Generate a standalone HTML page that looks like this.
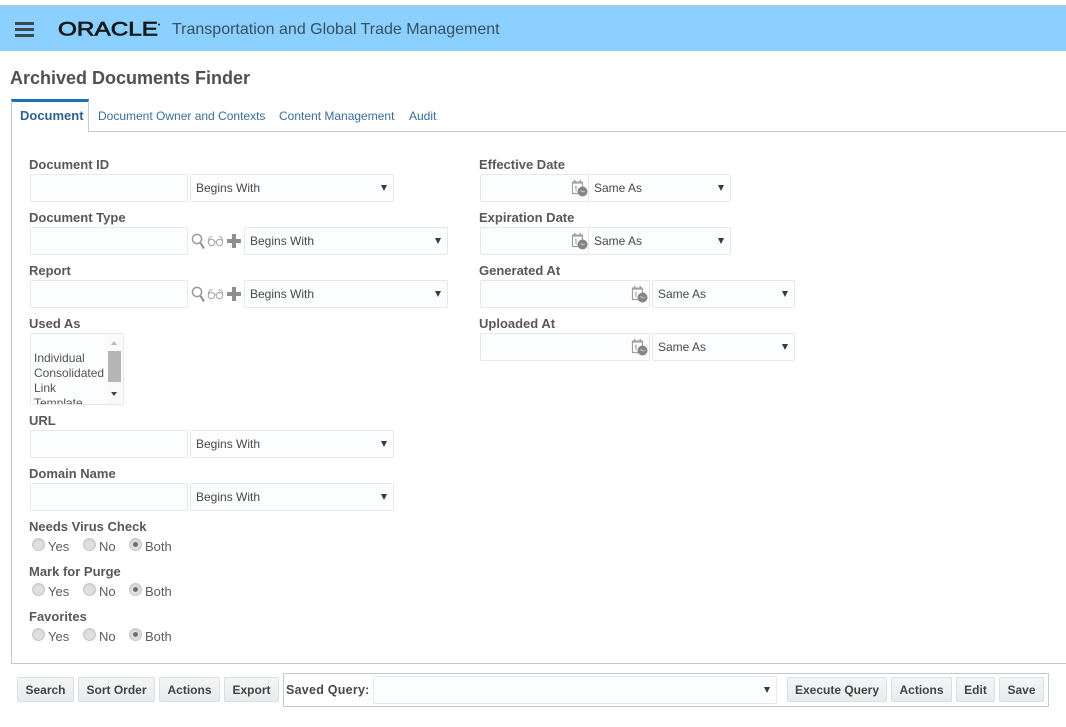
<!DOCTYPE html>
<html><head><meta charset="utf-8"><title>Archived Documents Finder</title>
<style>
html,body{margin:0;padding:0;background:#fff}
body{position:relative;width:1066px;height:727px;overflow:hidden;font-family:"Liberation Sans",sans-serif;font-size:12px;color:#4b4946}
.a,.l,.i,.s,.t,.b,.r,.c{position:absolute;box-sizing:border-box}
.l{font-weight:bold;font-size:13px;left:29px;line-height:16px;margin-top:1px;color:#5a5754;white-space:nowrap}
.i,.s{height:28px;background:#fbfdff;border:1px solid #e6e9ec;border-radius:2px}
.s{line-height:26px;padding-left:5px;color:#4a4846}
.s:after{content:"";position:absolute;right:6px;top:10px;border-left:3px solid transparent;border-right:3px solid transparent;border-top:6px solid #3a3a3a}
.t{font-size:12px;color:#3a6d96;line-height:16px;top:108px;white-space:nowrap}
.b{top:677px;height:25px;line-height:24px;background:linear-gradient(#f3f5f6,#e8ebed);border:1px solid #dcdfe2;border-radius:2px;text-align:center;font-weight:bold;font-size:12px;color:#454341;white-space:nowrap}
.r{width:13px;height:13px;border-radius:50%;background:#e0e0e0;border:1px solid #c8c8c8;box-shadow:inset 0 1px 2px #ccc}
.r.on:after{content:"";position:absolute;left:3px;top:3px;width:5px;height:5px;border-radius:50%;background:#707070}
.c{font-size:13px;line-height:16px;margin-top:1px;color:#605d5a;white-space:nowrap}
svg.ic{position:absolute;overflow:visible}
</style></head><body>
<svg width="0" height="0" style="position:absolute"><defs>
<symbol id="lov" viewBox="0 0 52 18" overflow="visible">
<circle cx="6" cy="7" r="4.600" fill="none" stroke="#999" stroke-width="1.500"/><path d="M9.500 11L13 16.500" stroke="#8b8b8b" stroke-width="2" fill="none"/>
<g fill="none" stroke="#a5a5a5" stroke-width="1"><circle cx="20.500" cy="10.500" r="3.200"/><circle cx="28.500" cy="10.500" r="3.200"/><path d="M23.700 10q.8-.8 1.600 0M17.300 9.500q.3-5 4-5M31.700 9.500q-.3-5-4-5"/></g>
<path d="M41 2h4v5h5v4h-5v5h-4v-5h-5v-4h5z" fill="#8e8e8e"/>
</symbol>
<symbol id="cal" viewBox="0 0 18 16" overflow="visible">
<path d="M1.500 3h10v10.500h-10z" fill="#fff" stroke="#a0a0a0" stroke-width="1.200"/><path d="M1 1.500h11v2H1zM3 0h1.500v2H3zM8.500 0H10v2H8.500z" fill="#a0a0a0"/>
<path d="M4 7l1-.7v5" stroke="#999" fill="none"/><circle cx="11.500" cy="11.500" r="5" fill="#858585"/><path d="M9.500 10.500l2.200 1.200h2" stroke="#ccc" fill="none"/>
</symbol>
</defs></svg>

<!-- header -->
<div class="a" style="left:0;top:5px;width:1066px;height:46px;background:#8cd0ff;border-top:1px solid #b4c6d2"></div>
<div class="a" style="left:15px;top:22px;width:19px;height:3px;background:#3a4a55"></div>
<div class="a" style="left:15px;top:28px;width:19px;height:3px;background:#3a4a55"></div>
<div class="a" style="left:15px;top:34px;width:19px;height:3px;background:#3a4a55"></div>
<svg class="ic" style="left:56px;top:18px" width="110" height="24"><text x="2" y="17.500" font-family="Liberation Sans" font-size="19" fill="#16191b" stroke="#16191b" stroke-width=".7" textLength="100" lengthAdjust="spacingAndGlyphs">ORACLE</text><circle cx="103" cy="6.500" r="1" fill="#16191b"/></svg>
<div class="a" style="left:172px;top:20px;font-size:16px;line-height:20px;color:#35505f;white-space:nowrap">Transportation and Global Trade Management</div>

<div class="a" style="left:10px;top:67px;font-size:18px;line-height:22px;font-weight:bold;color:#524f4c;white-space:nowrap">Archived Documents Finder</div>

<!-- tabs / panel -->
<div class="a" style="left:89px;top:131px;width:977px;height:1px;background:#bccdd8"></div>
<div class="a" style="left:11px;top:99px;width:78px;height:33px;border:1px solid #bccdd8;border-top:3px solid #1a6fb5;border-bottom:0;background:#fff"></div>
<div class="a" style="left:11px;top:131px;width:1055px;height:533px;border-left:1px solid #bccdd8;border-bottom:1px solid #bccdd8"></div>
<div class="a" style="left:20px;top:108px;font-size:13px;line-height:16px;font-weight:bold;color:#2f6490">Document</div>
<div class="t" style="left:98px">Document Owner and Contexts</div>
<div class="t" style="left:279px">Content Management</div>
<div class="t" style="left:409px">Audit</div>

<!-- left column -->
<div class="l" style="top:156px">Document ID</div>
<div class="i" style="left:30px;top:174px;width:158px"></div>
<div class="s" style="left:190px;top:174px;width:204px">Begins With</div>

<div class="l" style="top:209px">Document Type</div>
<div class="i" style="left:30px;top:227px;width:158px"></div>
<svg class="ic" style="left:191px;top:232px" width="52" height="18"><use href="#lov"/></svg>
<div class="s" style="left:244px;top:227px;width:204px">Begins With</div>

<div class="l" style="top:262px">Report</div>
<div class="i" style="left:30px;top:280px;width:158px"></div>
<svg class="ic" style="left:191px;top:285px" width="52" height="18"><use href="#lov"/></svg>
<div class="s" style="left:244px;top:280px;width:204px">Begins With</div>

<div class="l" style="top:315px">Used As</div>
<div class="i" style="left:30px;top:333px;width:94px;height:72px;overflow:hidden">
  <div class="a" style="left:3px;top:17px;line-height:15px;color:#55524f">Individual<br>Consolidated<br>Link<br>Template</div>
  <div class="a" style="right:2px;top:0;width:15px;height:70px;background:#fafafa"></div>
  <div class="a" style="left:77px;top:17px;width:13px;height:31px;background:#b5b5b5"></div>
  <div class="a" style="left:80px;top:7px;border-left:3.500px solid transparent;border-right:3.500px solid transparent;border-bottom:4px solid #bbb"></div>
  <div class="a" style="left:80px;top:58px;border-left:3.500px solid transparent;border-right:3.500px solid transparent;border-top:4px solid #444"></div>
</div>

<div class="l" style="top:412px">URL</div>
<div class="i" style="left:30px;top:430px;width:158px"></div>
<div class="s" style="left:190px;top:430px;width:204px">Begins With</div>

<div class="l" style="top:465px">Domain Name</div>
<div class="i" style="left:30px;top:483px;width:158px"></div>
<div class="s" style="left:190px;top:483px;width:204px">Begins With</div>

<div class="l" style="top:518px">Needs Virus Check</div>
<div class="r" style="left:32px;top:538px"></div><div class="c" style="left:48px;top:538px">Yes</div>
<div class="r" style="left:83px;top:538px"></div><div class="c" style="left:99px;top:538px">No</div>
<div class="r on" style="left:129px;top:538px"></div><div class="c" style="left:145px;top:538px">Both</div>

<div class="l" style="top:563px">Mark for Purge</div>
<div class="r" style="left:32px;top:583px"></div><div class="c" style="left:48px;top:583px">Yes</div>
<div class="r" style="left:83px;top:583px"></div><div class="c" style="left:99px;top:583px">No</div>
<div class="r on" style="left:129px;top:583px"></div><div class="c" style="left:145px;top:583px">Both</div>

<div class="l" style="top:608px">Favorites</div>
<div class="r" style="left:32px;top:628px"></div><div class="c" style="left:48px;top:628px">Yes</div>
<div class="r" style="left:83px;top:628px"></div><div class="c" style="left:99px;top:628px">No</div>
<div class="r on" style="left:129px;top:628px"></div><div class="c" style="left:145px;top:628px">Both</div>

<!-- right column -->
<div class="l" style="left:479px;top:156px">Effective Date</div>
<div class="i" style="left:480px;top:174px;width:109px"></div>
<svg class="ic" style="left:571px;top:180px" width="18" height="16"><use href="#cal"/></svg>
<div class="s" style="left:588px;top:174px;width:143px">Same As</div>

<div class="l" style="left:479px;top:209px">Expiration Date</div>
<div class="i" style="left:480px;top:227px;width:109px"></div>
<svg class="ic" style="left:571px;top:233px" width="18" height="16"><use href="#cal"/></svg>
<div class="s" style="left:588px;top:227px;width:143px">Same As</div>

<div class="l" style="left:479px;top:262px">Generated At</div>
<div class="i" style="left:480px;top:280px;width:170px"></div>
<svg class="ic" style="left:631px;top:286px" width="18" height="16"><use href="#cal"/></svg>
<div class="s" style="left:652px;top:280px;width:143px">Same As</div>

<div class="l" style="left:479px;top:315px">Uploaded At</div>
<div class="i" style="left:480px;top:333px;width:170px"></div>
<svg class="ic" style="left:631px;top:339px" width="18" height="16"><use href="#cal"/></svg>
<div class="s" style="left:652px;top:333px;width:143px">Same As</div>

<!-- bottom bar -->
<div class="b" style="left:17px;width:57px">Search</div>
<div class="b" style="left:78px;width:77px">Sort Order</div>
<div class="b" style="left:159px;width:61px">Actions</div>
<div class="b" style="left:224px;width:55px">Export</div>
<div class="a" style="left:283px;top:673px;width:766px;height:34px;border:1px solid #bccdd8"></div>
<div class="a" style="left:286px;top:683px;font-size:12.500px;letter-spacing:.25px;line-height:14px;font-weight:bold;color:#4b4946;white-space:nowrap">Saved Query:</div>
<div class="s" style="left:373px;top:676px;width:404px;height:28px"></div>
<div class="b" style="left:787px;width:100px">Execute Query</div>
<div class="b" style="left:891px;width:61px">Actions</div>
<div class="b" style="left:956px;width:39px">Edit</div>
<div class="b" style="left:999px;width:45px">Save</div>
</body></html>
